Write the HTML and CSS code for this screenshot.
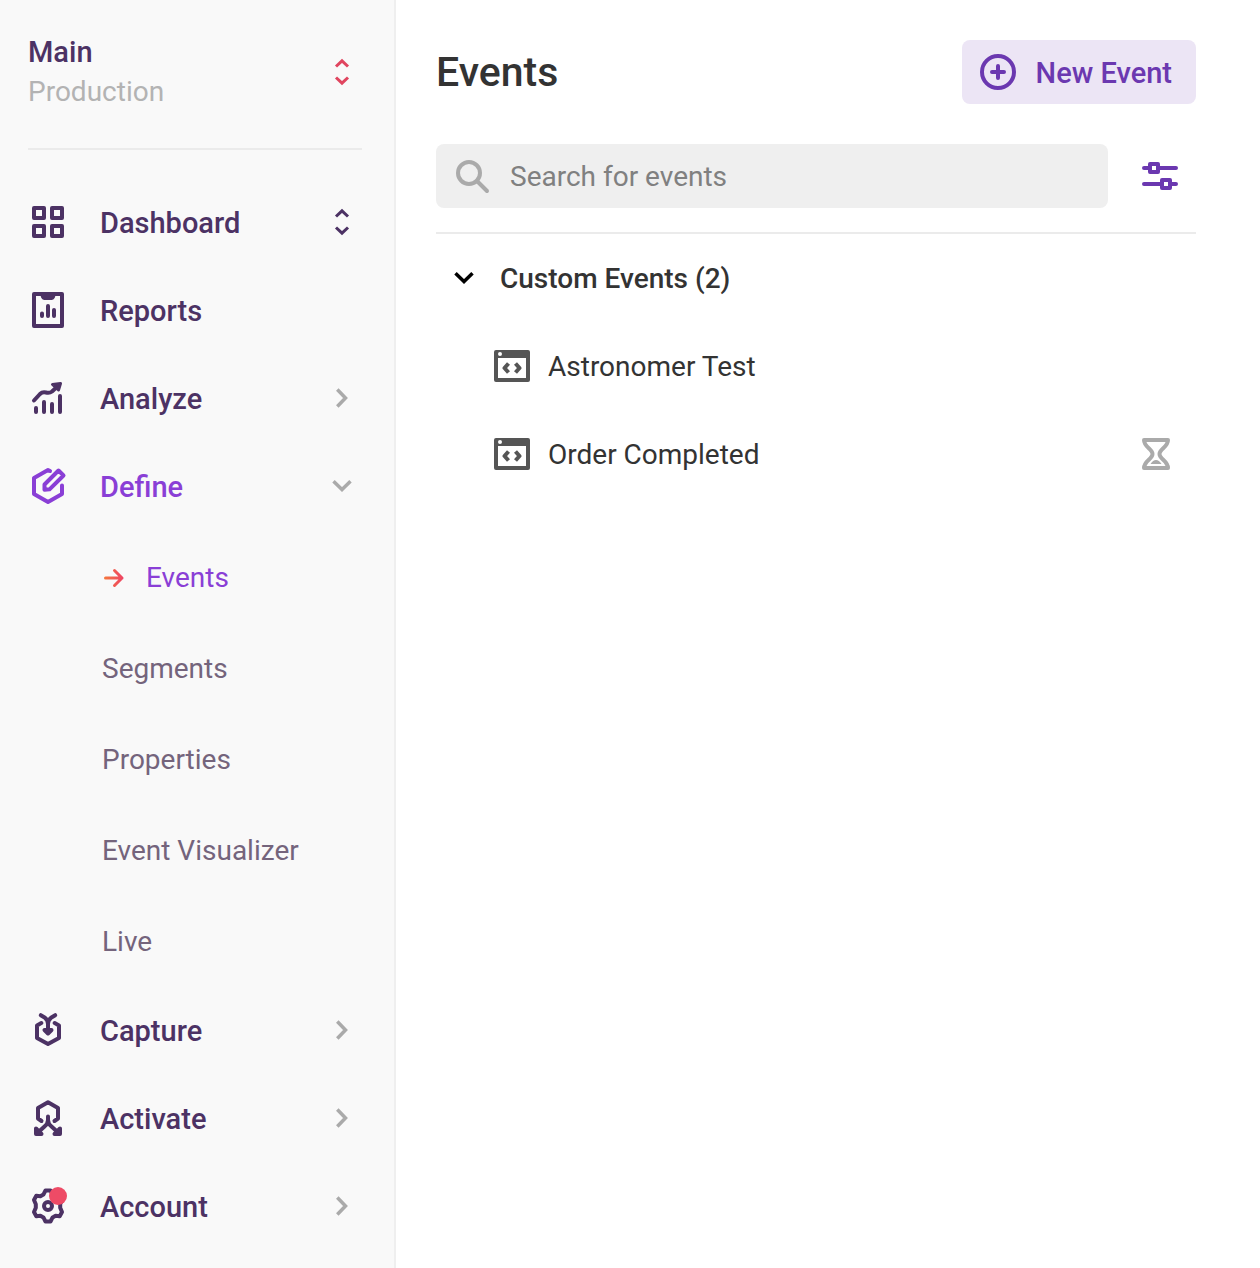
FILE: index.html
```html
<!DOCTYPE html>
<html lang="en">
<head>
<meta charset="utf-8">
<meta name="viewport" content="width=device-width, initial-scale=1">
<title>Events</title>
<link rel="stylesheet" href="styles.css">
</head>
<body>
<svg class="sprite" aria-hidden="true">
  <symbol id="updown" viewBox="0 0 24 40"><path d="M6 14.500 12 8.800 18 14.500M6 25.500 12 31.200 18 25.500" stroke-width="3"/></symbol>
  <symbol id="right" viewBox="0 0 24 40"><path d="M7.300 11.500 15.500 20 7.300 28.500" stroke-width="3.500"/></symbol>
  <symbol id="down" viewBox="0 0 24 40"><path d="M3.500 15.200 12 23.500 20.500 15.200" stroke-width="3.500"/></symbol>
  <symbol id="window" viewBox="0 0 36 32">
    <path fill="currentColor" stroke="none" fill-rule="evenodd" d="M2 0H34Q36 0 36 2V30Q36 32 34 32H2Q0 32 0 30V2Q0 0 2 0ZM4 8V28H32V8ZM6 2A2 2 0 1 0 6 6A2 2 0 1 0 6 2Z"/>
    <path d="M14.500 13.500 10.500 18 14.500 22.500M21.500 13.500 25.500 18 21.500 22.500" stroke-width="4" stroke-linecap="butt"/>
  </symbol>
</svg>
<div class="app">
  <aside class="sidebar">
    <button class="switcher" type="button">
      <span class="names"><span class="project">Main</span><span class="environment">Production</span></span>
      <svg class="arrow"><use href="#updown"/></svg>
    </button>
    <nav class="nav">
      <a class="item" href="#dashboard">
        <svg class="icon" viewBox="0 0 40 40"><path d="M6 6h10v10H6zM24 6h10v10H24zM6 24h10v10H6zM24 24h10v10H24z"/></svg>
        <span class="label">Dashboard</span>
        <svg class="arrow strong"><use href="#updown"/></svg>
      </a>
      <a class="item" href="#reports">
        <svg class="icon" viewBox="0 0 40 40"><path d="M6 4h28v32H6z"/><path d="M12.500 5C13 9 15 10 17 10h6c2 0 4-1 4.500-5z" fill="currentColor" stroke="none"/><path d="M14 23.500v2.500M20 16v10M26 20v6"/></svg>
        <span class="label">Reports</span>
      </a>
      <a class="item" href="#analyze">
        <svg class="icon" viewBox="0 0 40 40"><path d="M8 30v4M16 24v10M24 26v8M32 18v16M6 22.500 12 16Q14.500 13.500 18 14.500 21.500 15.500 24 13.500L30 8"/><path d="M24.500 6.500 32.500 5.500 30.500 12z" fill="currentColor" stroke-width="3"/></svg>
        <span class="label">Analyze</span>
        <svg class="arrow"><use href="#right"/></svg>
      </a>
      <a class="item active" href="#define" aria-expanded="true">
        <svg class="icon" viewBox="0 0 40 40"><path d="M22 5 20 4 6 12V28L20 36 34 28V19.500M16.500 23.800V18.500L30.500 4.500 35.500 9.500 21.500 23.300Z"/></svg>
        <span class="label">Define</span>
        <svg class="arrow"><use href="#down"/></svg>
      </a>
      <div class="subnav">
        <a class="subitem current" href="#events">
          <svg class="pointer" viewBox="0 0 24 24"><defs><linearGradient id="warm" gradientUnits="userSpaceOnUse" x1="2" y1="0" x2="22" y2="0"><stop offset="0" stop-color="#f5783c"/><stop offset="1" stop-color="#ee4266"/></linearGradient></defs><path d="M3.500 12H20M12.500 4.500 20 12 12.500 19.500" stroke="url(#warm)" stroke-width="3"/></svg>
          Events</a>
        <a class="subitem" href="#segments">Segments</a>
        <a class="subitem" href="#properties">Properties</a>
        <a class="subitem" href="#visualizer">Event Visualizer</a>
        <a class="subitem" href="#live">Live</a>
      </div>
      <a class="item" href="#capture">
        <svg class="icon" viewBox="0 0 40 40"><path d="M13.300 13 9 15.400V28L20 34 31 28V15.400L26.700 13M12.800 5.200 17 7.800Q20 10 20 14Q20 10 23 7.800L27.200 5.200M20 12V22"/><path d="M16.500 20H23.500L20 23.500Z" fill="currentColor"/></svg>
        <span class="label">Capture</span>
        <svg class="arrow"><use href="#right"/></svg>
      </a>
      <a class="item" href="#activate">
        <svg class="icon" viewBox="0 0 40 40"><path d="M13.500 23 10 20.500V10L20 4.200 30 10V20.500L26.500 23M20 18.500V22Q20 25.500 16.500 28.500L11 33.500M20 22Q20 25.500 23.500 28.500L29 33.500"/><path d="M8 30.500V36H13.500ZM32 30.500V36H26.500Z" fill="currentColor"/></svg>
        <span class="label">Activate</span>
        <svg class="arrow"><use href="#right"/></svg>
      </a>
      <a class="item" href="#account">
        <svg class="icon" viewBox="0 0 40 40"><path d="M17.500 4.500H22.500L24.600 8.600 27.600 10.300 31.700 9.800 34 14 32.200 18.300V21.700L34 26 31.700 30.200 27.600 29.700 24.600 31.400 22.500 35.500H17.500L15.400 31.400 12.400 29.700 8.300 30.200 6 26 7.800 21.700V18.300L6 14 8.300 9.800 12.400 10.300 15.400 8.600Z"/><circle cx="20" cy="20" r="4"/><circle cx="30" cy="10" r="9" fill="#ee4b66" stroke="none"/></svg>
        <span class="label">Account</span>
        <svg class="arrow"><use href="#right"/></svg>
      </a>
    </nav>
  </aside>
  <main class="main">
    <header class="header">
      <h1 class="title">Events</h1>
      <button class="new" type="button">
        <svg class="plus" viewBox="0 0 36 36"><circle cx="18" cy="18" r="16"/><path d="M18 12v12M12 18h12"/></svg>
        <span class="caption">New Event</span>
      </button>
    </header>
    <div class="tools">
      <label class="search">
        <svg class="glass" viewBox="0 0 36 36"><circle cx="15" cy="15" r="11"/><path d="M23 23 33 33"/></svg>
        <input class="field" type="search" placeholder="Search for events" aria-label="Search for events">
      </label>
      <button class="filter" type="button" aria-label="Filter">
        <svg class="sliders" viewBox="0 0 36 28"><path d="M2 6H6M18 6H34M2 22H18M30 22H34M8 2h8v8H8zM20 18h8v8h-8z"/></svg>
      </button>
    </div>
    <section class="events">
      <h2 class="heading"><button class="toggle" type="button" aria-expanded="true"><svg class="arrow"><use href="#down"/></svg><span class="caption">Custom Events (2)</span></button></h2>
      <ul class="list">
        <li class="event"><svg class="window"><use href="#window"/></svg><a class="name" href="#astronomer">Astronomer Test</a></li>
        <li class="event"><svg class="window"><use href="#window"/></svg><a class="name" href="#order">Order Completed</a>
          <svg class="pending" viewBox="0 0 28 32" role="img" aria-label="Pending"><path d="M2 2H26C26 9 17.500 11 17.500 16S26 23 26 30H2C2 23 10.500 21 10.500 16S2 9 2 2Z"/><path d="M8.500 26Q11 22 14 22T19.500 26Z" fill="currentColor" stroke="none"/></svg></li>
      </ul>
    </section>
  </main>
</div>
</body>
</html>
```

FILE: styles.css
```css
*, *::before, *::after { box-sizing: border-box; }

body {
  margin: 0;
  background: #fff;
  color: #333;
  font: 400 28px/40px Roboto, "Liberation Sans", sans-serif;
}

a { color: inherit; text-decoration: none; }

button {
  padding: 0;
  border: 0;
  background: none;
  color: inherit;
  font: inherit;
  text-align: left;
  cursor: pointer;
}

svg {
  flex: none;
  fill: none;
  stroke: currentColor;
  stroke-width: 4px;
  stroke-linecap: round;
  stroke-linejoin: round;
}

.sprite { display: none; }

.app { display: flex; min-height: 100vh; }

/* Sidebar */
.sidebar {
  flex: none;
  width: 396px;
  padding: 32px 32px 18px 28px;
  border-right: 2px solid #efefef;
  background: #f9f9f9;
  color: #4c3264;
}

.switcher {
  display: flex;
  align-items: center;
  justify-content: space-between;
  width: 100%;
  padding-bottom: 36px;
  border-bottom: 2px solid #ebebeb;
}

.names { display: flex; flex-direction: column; }
.project { font-size: 29px; font-weight: 500; }
.environment { color: #b3b3b3; }

.arrow {
  width: 24px;
  height: 40px;
  margin-right: 8px;
  color: #aaa;
  stroke-linecap: butt;
  stroke-linejoin: miter;
}
.switcher .arrow { color: #e0455f; }
.strong { color: #4c3264; }

.nav { padding-top: 28px; }

.item {
  display: flex;
  align-items: center;
  gap: 32px;
  height: 88px;
  font-size: 29px;
  font-weight: 500;
}
.active { color: #8a3fd6; }
.active .arrow { color: #aaa; }
.icon { width: 40px; height: 40px; }
.label { flex: 1; }
.label, .caption, .name { padding-top: 2px; }

.subnav { height: 456px; padding: 2px 0 0 74px; color: #74647c; }
.subitem { display: flex; align-items: center; height: 91px; }
.current { gap: 20px; color: #8a3fd6; }
.pointer { width: 24px; height: 24px; }

/* Content */
.main { flex: 1; min-width: 0; padding: 40px 64px 40px 40px; }

.header { display: flex; align-items: center; justify-content: space-between; }
.title { margin: 0; font-size: 41px; font-weight: 500; line-height: 64px; }

.new {
  display: flex;
  align-items: center;
  gap: 20px;
  height: 64px;
  padding: 0 24px 0 18px;
  border-radius: 8px;
  background: #ece5f5;
  color: #6b38b0;
  font-size: 29px;
  font-weight: 500;
}
.plus { width: 36px; height: 36px; }

.tools {
  display: flex;
  align-items: center;
  gap: 24px;
  padding: 40px 8px 24px 0;
}
.search {
  display: flex;
  flex: 1;
  align-items: center;
  gap: 20px;
  height: 64px;
  padding: 0 18px;
  border-radius: 8px;
  background: #efefef;
}
.glass { width: 36px; height: 36px; color: #aaa; }
.field {
  flex: 1;
  min-width: 0;
  padding: 2px 0 0;
  border: 0;
  outline: 0;
  background: none;
  color: #333;
  font: inherit;
}
.field::placeholder { color: #808080; opacity: 1; }
.filter { display: flex; justify-content: center; width: 56px; color: #6b38b0; }
.sliders { width: 36px; height: 28px; }

.events { border-top: 2px solid #ebebeb; }
.heading { margin: 0; font-size: 28px; font-weight: 500; }
.toggle { display: flex; align-items: center; gap: 16px; width: 100%; height: 88px; padding-left: 16px; }
.toggle .arrow { color: #000; }

.list { margin: 0; padding: 0 26px 0 58px; list-style: none; }
.event { display: flex; align-items: center; gap: 18px; height: 88px; }
.window { width: 36px; height: 32px; color: #555; }
.name { flex: 1; }
.pending { width: 28px; height: 32px; color: #aaa; }
```
